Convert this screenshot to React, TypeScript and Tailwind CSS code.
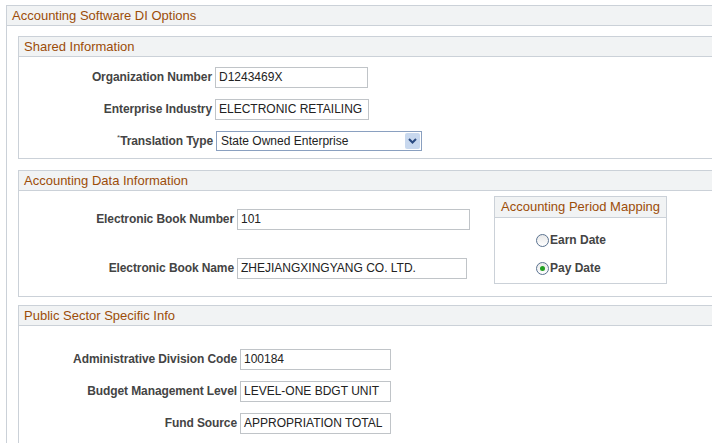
const border = "border border-[#cbd1d8]";
const head = "h-[20px] bg-[#f1f3f4] border-b border-[#cbd1d8] px-[5px] text-[13px] leading-[19px] text-[#9c4d09]";

const Input = ({ value, w }: { value: string; w: number }) => (
  <div
    className="h-[21px] border border-[#c0c4c8] bg-white px-[3px] text-[12px] leading-[19px] text-[#222]"
    style={{ width: w }}
  >
    {value}
  </div>
);

const Row = ({ label, labelW, children, h = 32 }: { label: React.ReactNode; labelW: number; children: React.ReactNode; h?: number }) => (
  <div className="flex items-center" style={{ height: h }}>
    <div className="pr-[3px] text-right text-[12px] font-bold tracking-[-0.1px] text-[#444]" style={{ width: labelW }}>
      {label}
    </div>
    {children}
  </div>
);

const Radio = ({ on }: { on?: boolean }) => (
  <span className="mr-[1px] flex h-[13px] w-[13px] items-center justify-center rounded-full border border-[#5a7290] bg-gradient-to-b from-[#e8e8e8] to-white">
    {on && <span className="h-[5px] w-[5px] rounded-full bg-[#22a022]" />}
  </span>
);

export default function App() {
  return (
    <div className="h-[443px] w-[712px] bg-white pl-[6px] pt-[5px]" style={{ fontFamily: "Arial, 'Liberation Sans', sans-serif" }}>
      <div className={`${border} h-[440px] border-r-0`}>
        <div className={head}>Accounting Software DI Options</div>
        <div className="pl-[11px] pt-[10px]">
          <div className={`${border} h-[123px] border-r-0`}>
            <div className={head}>Shared Information</div>
            <div className="pt-[4px]">
              <Row label="Organization Number" labelW={196}><Input value="D1243469X" w={153} /></Row>
              <Row label="Enterprise Industry" labelW={196}><Input value="ELECTRONIC RETAILING" w={154} /></Row>
              <Row label={<><span className="align-top text-[8px] font-normal">*</span>Translation Type</>} labelW={197}>
                <div className="flex h-[20px] w-[206px] items-center justify-between border border-[#8aa0c0] bg-white pl-[4px] pr-[1px] text-[12px] text-[#222]">
                  State Owned Enterprise
                  <span className="flex h-[16px] w-[15px] items-center justify-center rounded-[2px] bg-[#c8d8ee] text-[#2a4a80]">
                    <svg width="9" height="6" viewBox="0 0 9 6"><path d="M1 1l3.5 3.5L8 1" fill="none" stroke="currentColor" strokeWidth="2" /></svg>
                  </span>
                </div>
              </Row>
            </div>
          </div>

          <div className={`${border} mt-[11px] h-[127px] border-r-0`}>
            <div className={head}>Accounting Data Information</div>
            <div className="flex">
              <div className="pt-[13px]">
                <Row label="Electronic Book Number" labelW={218} h={30}><Input value="101" w={233} /></Row>
                <div className="h-[19px]" />
                <Row label="Electronic Book Name" labelW={218} h={30}><Input value="ZHEJIANGXINGYANG CO. LTD." w={230} /></Row>
              </div>
              <div className={`${border} ml-[24px] mt-[5px] h-[88px] w-[173px]`}>
                <div className="h-[21px] border-b border-[#cbd1d8] bg-[#f1f3f4] text-center text-[13px] leading-[20px] text-[#9c4d09]">Accounting Period Mapping</div>
                <div className="pl-[41px] pt-[8px] text-[12px] font-bold text-[#444]">
                  <div className="flex h-[28px] items-center"><Radio />Earn Date</div>
                  <div className="flex h-[28px] items-center"><Radio on />Pay Date</div>
                </div>
              </div>
            </div>
          </div>

          <div className={`${border} mt-[8px] h-[141px] border-r-0`}>
            <div className={head}>Public Sector Specific Info</div>
            <div className="pt-[17px]">
              <Row label="Administrative Division Code" labelW={221}><Input value="100184" w={151} /></Row>
              <Row label="Budget Management Level" labelW={221}><Input value="LEVEL-ONE BDGT UNIT" w={151} /></Row>
              <Row label="Fund Source" labelW={221}><Input value="APPROPRIATION TOTAL" w={151} /></Row>
            </div>
          </div>
        </div>
      </div>
    </div>
  );
}
